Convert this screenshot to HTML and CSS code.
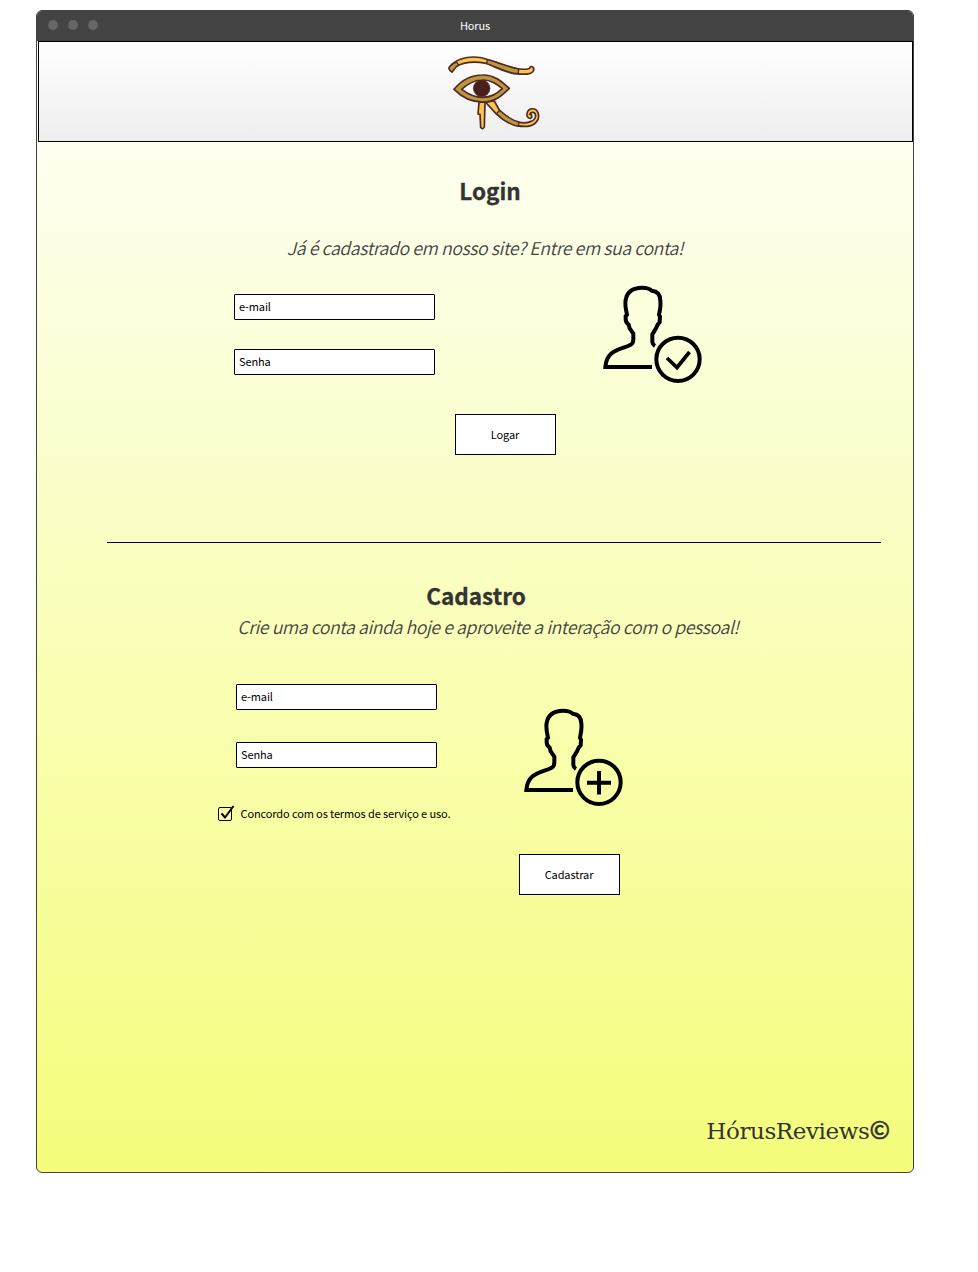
FILE: index.html
```html
<!DOCTYPE html>
<html lang="pt-BR">
<head>
<meta charset="utf-8">
<title>Horus</title>
<link rel="stylesheet" href="styles.css">
</head>
<body>
<svg width="0" height="0" class="defs">
  <symbol id="person" viewBox="36 27 300 300">
    <path d="M186 276H46C50 222 92 225 122 209Q130 205 130 193V176L119 160L116 149Q107 143 107 133L107 123L111 119C107 101 104 89 107 75C111 49 128 38 157 38Q176 38 185 47Q211 49 211 77Q213 93 207 119L210 125L209 142L203 149L198 160L187 178V201Q188 209 195 213" fill="none" stroke="#000" stroke-width="12"/>
    <circle cx="264" cy="253" r="65" fill="none" stroke="#000" stroke-width="12"/>
  </symbol>
</svg>
<div class="window">
  <div class="titlebar">
    <div class="dots"><i></i><i></i><i></i></div>
    <span>Horus</span>
  </div>
  <header>
    <svg class="eye" viewBox="0 0 360 285" stroke="#4f2925" stroke-width="5" stroke-linejoin="round">
      <path d="M51 81C44 77 40 70 44 65C70 33 121 31 156 43C200 55 241 77 278 72Q285 71 286 66C292 61 299 70 295 78C289 90 267 88 250 87C215 86 181 65 153 55C120 49 88 51 64 64Z" fill="#fac54f"/>
      <path d="M51 81C44 77 40 70 44 65Q53 56 65 51L71 61L64 65ZM157 44C192 53 220 67 251 72L250 86C215 85 190 67 155 56Z" fill="#bb963f" stroke-width="4"/>
      <path d="M132 172L150 171L148 246Q143 256 137 247L135 208L129 207Z" fill="#fac54f"/>
      <path d="M151 171L178 168L194 197C211 212 233 228 253 232C273 236 300 231 302 213C301 200 289 199 284 208Q292 208 290 217C282 225 274 214 276 206C279 188 302 186 309 203C317 226 298 242 277 244C239 247 203 226 183 206Z" fill="#fac54f"/>
      <path d="M194 196C211 212 233 227 252 231L250 244C224 240 203 224 184 206Z" fill="#bb963f" stroke-width="4"/>
      <path d="M57 133C83 101 110 90 142 90C181 89 202 112 223 130C199 153 181 171 142 171C105 171 80 156 57 133Z" fill="#bb963f"/>
      <path d="M80 133C102 113 120 105 142 105C168 104 185 117 202 131C183 148 168 157 142 157C116 157 99 147 80 133Z" fill="#fff"/>
      <circle cx="140" cy="130" r="25" fill="#491f1d" stroke-width="2"/>
    </svg>
  </header>
  <main>
    <section class="login">
      <h2>Login</h2>
      <p class="lead">Já é cadastrado em nosso site? Entre em sua conta!</p>
      <div class="row">
        <div class="fields">
          <div class="field">e-mail</div>
          <div class="field">Senha</div>
        </div>
        <svg class="user"><use href="#person"/><path d="M65 74L75 83.500L87.500 68" fill="none" stroke="#000" stroke-width="3.700"/></svg>
      </div>
      <div class="button">Logar</div>
    </section>
    <hr>
    <section class="signup">
      <h2>Cadastro</h2>
      <p class="lead">Crie uma conta ainda hoje e aproveite a interação com o pessoal!</p>
      <div class="row">
        <div class="fields">
          <div class="field">e-mail</div>
          <div class="field">Senha</div>
          <div class="terms">
            <svg class="check" viewBox="0 0 17 17" fill="none" stroke="#000"><rect x=".5" y="2.500" width="13" height="13" rx="1.500"/><path d="M3.500 8.500L7 12.500L15.500 1" stroke-width="2"/></svg>
            <span>Concordo com os termos de serviço e uso.</span>
          </div>
        </div>
        <div class="side">
          <svg class="user"><use href="#person"/><path d="M76 64V87.500M64 75.700H88" fill="none" stroke="#000" stroke-width="4"/></svg>
          <div class="button">Cadastrar</div>
        </div>
      </div>
    </section>
    <footer>HórusReviews<span>©</span></footer>
  </main>
</div>
</body>
</html>
```
FILE: styles.css
```css
* { box-sizing: border-box; }
body {
  margin: 0;
  padding: 10px 0 0 36px;
  background: #fff;
  color: #000;
  font: 11px/16px "Noto Sans CJK SC", "Noto Sans", sans-serif;
  letter-spacing: -.12px;
}
.defs { display: none; }
.window {
  width: 878px;
  height: 1163px;
  border: 1px solid #434343;
  border-radius: 6px;
  overflow: hidden;
  display: flex;
  flex-direction: column;
  background: linear-gradient(#fff, #f5fd7b);
}
.titlebar {
  flex: none;
  height: 30px;
  background: #434343;
  color: #fff;
  display: grid;
  grid-template-columns: 1fr auto 1fr;
  align-items: center;
}
.titlebar span { padding-bottom: 2px; }
.dots { display: flex; gap: 10px; padding: 0 0 2px 10.5px; }
.dots i { width: 10px; height: 10px; border-radius: 50%; background: #666; }
header {
  flex: none;
  height: 101px;
  margin-left: 1px;
  border: 1px solid #000;
  background: linear-gradient(#fff, #eee);
  padding: 3px 0 0 396px;
}
.eye { display: block; width: 120px; height: 95px; }
main { flex: 1; display: flex; flex-direction: column; }
h2 {
  margin: 0;
  font-size: 22.500px;
  line-height: 30px;
  letter-spacing: 0;
  color: #333;
  -webkit-text-stroke: .3px #333;
  text-align: center;
  font-weight: 700;
}
.lead {
  margin: 0;
  font-size: 17.6px;
  line-height: 26px;
  letter-spacing: -.37px;
  font-style: italic;
  font-weight: 350;
  color: #444;
  text-align: center;
  white-space: nowrap;
}
.login { padding-top: 33px; }
.login h2 { padding-left: 30px; }
.login .lead { margin-top: 30px; padding-left: 20px; }
.row { display: flex; align-items: flex-start; }
.login .row { margin-top: 23px; padding-left: 197px; }
.fields { display: flex; flex-direction: column; }
.login .fields { gap: 29px; padding-top: 10px; }
.field {
  width: 201px;
  height: 26px;
  border: 1px solid #000;
  border-radius: 1px;
  background: #fff;
  padding: 3px 4px;
}
.user { display: block; width: 100px; height: 100px; }
.login .user { margin-left: 167px; }
.button {
  width: 101px;
  height: 41px;
  border: 1px solid #000;
  background: #fff;
  padding: 0 1px 2px 0;
  display: flex;
  align-items: center;
  justify-content: center;
}
.login .button { margin: 30px 0 0 418px; }
hr {
  width: 774px;
  height: 1px;
  margin: 87px 0 0 70px;
  border: 0;
  background: #000;
}
.signup { padding-top: 37px; }
.signup h2 { padding-left: 2px; }
.signup .lead { margin-top: 4px; padding-left: 26px; }
.signup .row { margin-top: 44px; padding-left: 181px; }
.signup .fields { width: 301px; gap: 32px; }
.signup .field { margin-left: 18px; }
.terms { display: flex; align-items: center; gap: 5.5px; margin-top: 5px; height: 17px; white-space: nowrap; }
.terms span { padding-bottom: 2px; }
.check { width: 17px; height: 17px; }
.side { padding-top: 23px; }
.signup .user { margin-left: 4px; }
.side .button { margin-top: 47px; }
footer {
  margin-top: auto;
  padding: 0 23px 26px 0;
  text-align: right;
  font: 23px/30px "DejaVu Serif", serif;
  letter-spacing: -.4px;
  color: #333;
}
footer span {
  font: 500 24.5px/30px "Noto Sans CJK SC", sans-serif;
  letter-spacing: 0;
  -webkit-text-stroke: .5px #333;
}
```
